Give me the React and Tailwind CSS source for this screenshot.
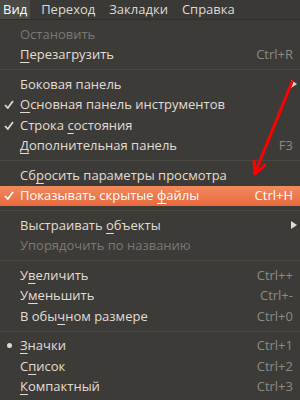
const bar = ['Вид', 'Переход', 'Закладки', 'Справка'];

const items = [
  { label: 'Остановить', disabled: true },
  { label: 'Перезагрузить', u: 0, keys: 'Ctrl+R' },
  'sep',
  { label: 'Боковая панель', sub: true },
  { label: 'Основная панель инструментов', u: 0, mark: 'check' },
  { label: 'Строка состояния', u: 7, mark: 'check' },
  { label: 'Дополнительная панель', u: 0, keys: 'F3' },
  'sep',
  { label: 'Сбросить параметры просмотра', u: 2 },
  { label: 'Показывать скрытые файлы', u: 19, mark: 'check', keys: 'Ctrl+H', active: true },
  'sep',
  { label: 'Выстраивать объекты', u: 12, sub: true },
  { label: 'Упорядочить по названию', disabled: true },
  'sep',
  { label: 'Увеличить', u: 1, keys: 'Ctrl++' },
  { label: 'Уменьшить', u: 1, keys: 'Ctrl+-' },
  { label: 'В обычном размере', u: 5, keys: 'Ctrl+0' },
  'sep',
  { label: 'Значки', u: 0, mark: 'dot', keys: 'Ctrl+1' },
  { label: 'Список', u: 1, keys: 'Ctrl+2' },
  { label: 'Компактный', u: 0, keys: 'Ctrl+3' },
];

function Label({ text, u }) {
  if (u === undefined) return text;
  return (
    <>
      {text.slice(0, u)}
      <span className="underline underline-offset-[3px]">{text[u]}</span>
      {text.slice(u + 1)}
    </>
  );
}

function Row({ it }) {
  const txt = it.active ? 'text-white' : it.disabled ? 'text-[#7b7973]' : 'text-[#e2ded5]';
  return (
    <div
      className={`flex items-center h-[20.5px] pr-[7px] ${txt} ${
        it.active ? 'bg-gradient-to-b from-[#f18a5e] to-[#e8693d]' : ''
      }`}
    >
      <span className="w-5 shrink-0 flex justify-center pr-[2px]">
        {it.mark === 'check' && (
          <svg width="10" height="9" viewBox="0 0 10 9">
            <path d="M1 5 L3.8 8 L9 1" stroke="currentColor" strokeWidth="1.7" fill="none" />
          </svg>
        )}
        {it.mark === 'dot' && <span className="block w-[5px] h-[5px] rounded-full bg-[#dfdbd2]" />}
      </span>
      <span className="flex-1 whitespace-nowrap">
        <Label text={it.label} u={it.u} />
      </span>
      {it.keys && (
        <span className={it.active ? 'text-white' : 'text-[#8c8a84]'}>{it.keys}</span>
      )}
      {it.sub && (
        <svg width="6" height="8" viewBox="0 0 6 8" className="mr-[-4px]">
          <path d="M0 0 L6 4 L0 8 Z" fill="#dfdbd2" />
        </svg>
      )}
    </div>
  );
}

export default function App() {
  return (
    <div
      className="relative w-[300px] h-[400px] overflow-hidden bg-[#3d3b37] text-[13px] leading-none"
      style={{ fontFamily: '"Open Sans", "DejaVu Sans", sans-serif' }}
    >
      {/* Menu bar */}
      <div className="flex h-5 bg-[#3a3935] border-b border-[#2f2e2b] text-[#dfdbd2]">
        {bar.map((b, i) => (
          <div
            key={b}
            className={`flex items-center px-[3px] mr-[8px] ${i === 0 ? 'bg-[#4b4a45] text-white' : ''}`}
          >
            {b}
          </div>
        ))}
      </div>

      {/* Menu */}
      <div className="pt-[4px]">
        {items.map((it, i) =>
          it === 'sep' ? (
            <div key={i} className="h-[9px] flex items-center">
              <div className="w-full h-px bg-[#2f2e2a] border-b border-[#4a4843]" />
            </div>
          ) : (
            <Row key={i} it={it} />
          )
        )}
      </div>

      {/* red arrow annotation */}
      <svg className="absolute left-0 top-0 pointer-events-none" width="300" height="400">
        <path d="M292 82 L255 173" stroke="#f00" strokeWidth="3" fill="none" strokeLinecap="round" />
        <path d="M254 161 L255 174 L265 165" stroke="#f00" strokeWidth="3" fill="none" strokeLinecap="round" strokeLinejoin="round" />
      </svg>
    </div>
  );
}
